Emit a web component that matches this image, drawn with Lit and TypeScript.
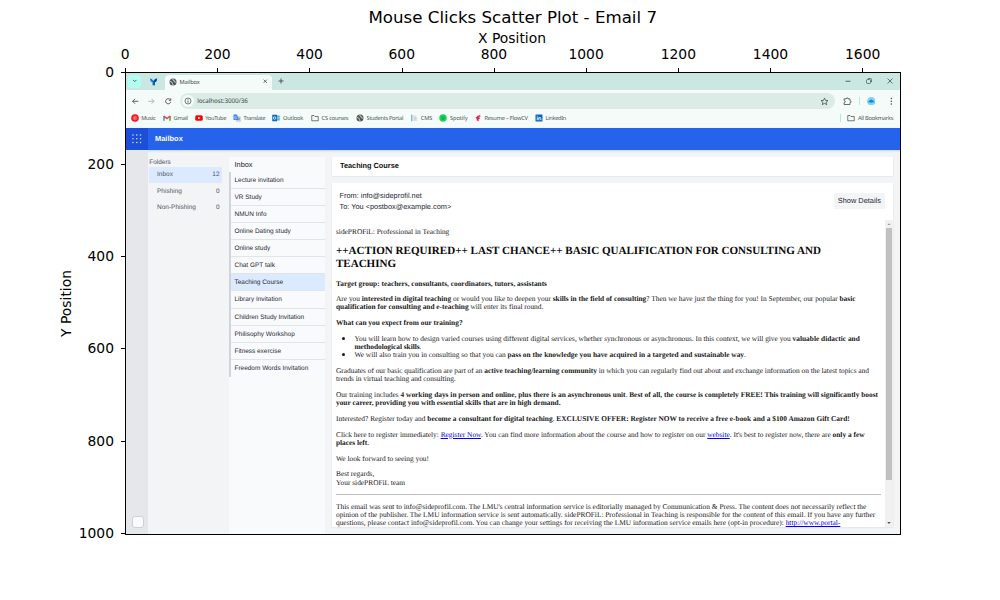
import { LitElement, html, css, svg, TemplateResult } from "lit";
import { customElement } from "lit/decorators.js";

const xTicks = [0, 200, 400, 600, 800, 1000, 1200, 1400, 1600];
const yTicks = [0, 200, 400, 600, 800, 1000];

const globe = svg`<circle cx="8" cy="8" r="7" fill="#4d5656"/><path d="M2 7 L5.5 8 L6.5 10.5 L8 12 L7.6 14.5 M8 1.6 L7.5 4 L10.5 5 L10.5 7.4 L14 8.5" fill="none" stroke="#e4eeec" stroke-width="1.6"/>`;
const folder = svg`<path d="M1.5 3 H6 L7.8 5 H14.5 V13.5 H1.5 Z" fill="none" stroke="#4a5453" stroke-width="1.5" stroke-linejoin="round"/>`;

const bookmarks: { icon: TemplateResult; label: string; w: number }[] = [
  { icon: svg`<circle cx="8" cy="8" r="7.6" fill="#f8101c"/><circle cx="8" cy="8" r="3.6" fill="none" stroke="#fbb" stroke-width="1"/><path d="M6.8 6 L10 8 L6.8 10 Z" fill="#fff"/>`, label: "Music", w: 14.3 },
  { icon: svg`<path d="M2 13.5 V4" stroke="#4285f4" stroke-width="3"/><path d="M14 13.5 V4" stroke="#34a853" stroke-width="3"/><path d="M1.5 4 L8 9.2 L14.5 4" fill="none" stroke="#ea4335" stroke-width="3"/>`, label: "Gmail", w: 14 },
  { icon: svg`<rect x="0.5" y="2.5" width="15" height="11" rx="3" fill="#f00"/><path d="M6.4 5.4 L11 8 L6.4 10.6 Z" fill="#fff"/>`, label: "YouTube", w: 21 },
  { icon: svg`<rect x="6" y="4.5" width="9.5" height="11" rx="1" fill="#c9d3df"/><path d="M1 1 H8 L11.5 12 H1 Z" fill="#4285f4"/><path d="M7 6 A2.2 2.2 0 1 0 7 8.2 H5" fill="none" stroke="#fff" stroke-width="1"/><path d="M10 8 H14.5 M12.5 8 Q12 11 10.5 12.5 M11 9.5 L14 12.8" stroke="#6b7f95" fill="none"/>`, label: "Translate", w: 21.7 },
  { icon: svg`<rect x="7" y="3" width="8.5" height="10" fill="#51b0ee"/><path d="M8 6 L11.5 9 L15.5 6" stroke="#e7f5ff" fill="none"/><rect x="0.5" y="1.5" width="9.5" height="13" fill="#0f6cbd"/><circle cx="5.2" cy="8" r="2.5" fill="none" stroke="#fff" stroke-width="1.5"/>`, label: "Outlook", w: 20 },
  { icon: folder, label: "CS courses", w: 26.8 },
  { icon: globe, label: "Students Portal", w: 36.5 },
  { icon: svg`<rect x="2" y="1.5" width="3" height="13" fill="#7fb9de"/><path d="M6.5 2.5 H11 L14.5 6 V14 H6.5 Z" fill="#dfe6ea"/><path d="M8 7 H12 M8 9.5 H13 M8 12 H13" stroke="#b4c1c9"/>`, label: "CMS", w: 11.5 },
  { icon: svg`<circle cx="8" cy="8" r="7.5" fill="#1ed760"/><path d="M4 5.8 Q8.5 4.5 12.3 6.6 M4.5 8.4 Q8.3 7.3 11.5 9 M5 10.8 Q8 10 10.8 11.3" fill="none" stroke="#17803d" stroke-width="1.1"/>`, label: "Spotify", w: 17.5 },
  { icon: svg`<path d="M5.5 4.5 L12.5 1.5 V6 L5.5 9 Z" fill="#ff2d6b"/><path d="M3 7 L7 5.5 L12.5 8.5 L9 10.5 L9.5 15 L5.5 12.5 V9.5 Z" fill="#e5194f"/>`, label: "Resume – FlowCV", w: 43.2 },
  { icon: svg`<rect x="1" y="1" width="14" height="14" rx="1" fill="#0a66c2"/><path d="M4.5 6.6 V12.4 M4.5 3.6 V5.2 M7.6 12.4 V6.6 M7.6 9.2 Q8 7 10 7 Q11.7 7 11.7 9.2 V12.4" fill="none" stroke="#fff" stroke-width="1.7"/>`, label: "LinkedIn", w: 20.5 },
];

const folders = [
  { name: "Inbox", w: 16, count: 12 },
  { name: "Phishing", w: 25, count: 0 },
  { name: "Non-Phishing", w: 39, count: 0 },
];

const mails = [
  { t: "Lecture invitation", w: 49 },
  { t: "VR Study", w: 27.3 },
  { t: "NMUN Info", w: 32 },
  { t: "Online Dating study", w: 56.3 },
  { t: "Online study", w: 35.7 },
  { t: "Chat GPT talk", w: 40.5 },
  { t: "Teaching Course", w: 48.5 },
  { t: "Library Invitation", w: 47.3 },
  { t: "Children Study Invitation", w: 69.7 },
  { t: "Philisophy Workshop", w: 60.3 },
  { t: "Fitness exercise", w: 46.5 },
  { t: "Freedom Words Invitation", w: 73.8 },
];

const icon = (body: unknown, cls = "ic") => html`<svg class=${cls} viewBox="0 0 16 16">${body}</svg>`;
const fit = (text: unknown, w: number) => html`<span class="fit" data-w=${w}>${text}</span>`;
const line = (text: unknown, w: number) => html`<span class="line">${fit(text, w)}</span>`;

/** Base that tracks every .fit run so that it fills its nominal width. */
class FittedElement extends LitElement {
  updated() {
    this.renderRoot.querySelectorAll<HTMLElement>(".fit").forEach((el) => {
      el.style.letterSpacing = "0px";
      const natural = el.getBoundingClientRect().width;
      const count = (el.textContent || "").length;
      el.style.letterSpacing = `${(Number(el.dataset.w) - natural) / count}px`;
    });
  }
}

const shared = css`
  :host { display: block; box-sizing: border-box; font-family: "Liberation Sans", Arial, sans-serif; text-rendering: geometricPrecision; }
  * { box-sizing: border-box; }
  .fit { display: inline-block; white-space: nowrap; }
  svg { display: block; flex: none; }
`;

@customElement("browser-chrome")
export class BrowserChrome extends FittedElement {
  static styles = [shared, css`
    :host { height: 54.5px; flex: none; background: #f4fbf9; color: #3f4a48; font-family: "Noto Sans", "Open Sans", sans-serif; font-size: 5.7px; line-height: 8px; }
    .strip { height: 17px; background: #cbe7e1; display: flex; padding-left: 2px; }
    .menu { width: 13px; height: 13px; margin: 1.5px 0 0; border-radius: 4px; background: #b2fff1; display: grid; place-items: center; }
    .menu svg { width: 5.5px; height: 5.5px; }
    .pin { width: 9px; height: 9px; margin: 4px 7px 0 8px; }
    .tab { width: 107px; height: 15px; margin-top: 2px; padding: 0 4px 2px; background: #f4fbf9; border-radius: 4px 4px 0 0; display: flex; align-items: center; }
    .tab .ic { width: 8px; height: 8px; margin-right: 2.6px; }
    .x { width: 6.5px; height: 6.5px; margin-left: auto; }
    .plus { width: 8px; height: 8px; margin: 4.2px 0 0 5.3px; }
    .win { margin-left: auto; display: flex; gap: 13px; padding: 4px 6.5px 0 0; }
    .win svg { width: 8px; height: 8px; }
    .bar { height: 19px; padding: 2px 6px 1px 5px; display: flex; align-items: center; margin-top: 1px; }
    .bar > svg { width: 8.6px; height: 8.6px; }
    .bar > .kebab { margin-left: auto; width: 9px; margin-right: -0.5px; }
    .back { margin-right: 7.8px; }
    .fwd { margin-right: 8.2px; }
    .url { width: 655px; height: 16px; margin: 0 7.7px; background: #dbece7; border-radius: 8px; display: flex; align-items: center; padding: 0 6px 0 1.5px; font-size: 6.3px; }
    .site { width: 12px; height: 12px; border-radius: 6px; background: #f4fbf9; display: grid; place-items: center; margin-right: 3.2px; }
    .site svg { width: 8px; height: 8px; }
    .star { width: 9px; height: 9px; margin-left: auto; }
    .sep { width: 1px; height: 8px; background: #a8efe3; margin: 0 7px 0 7px; }
    .marks { height: 16.4px; padding: 0 6.8px 0 4.6px; display: grid; align-items: center; grid-template-columns: 32.4px 31.6px 38.4px 39.5px 38.5px 45px 54.3px 29.2px 34.5px 61px 1fr auto; }
    .mark { display: flex; align-items: center; gap: 2.6px; color: #4c5856; }
    .mark .ic { width: 8px; height: 8px; }
    .mark .sep { margin: 0 4px 0 0; }
  `];
  render() {
    const k = "#414c4a";
    return html`
      <div class="strip">
        <div class="menu">${icon(svg`<path d="M3 5.5 L8 10.5 L13 5.5" fill="none" stroke=${k} stroke-width="2.6"/>`)}</div>
        ${icon(svg`<path d="M1.5 2.5 L5 3.5 L8 7 L11 3.5 L14.5 2.5 L13 8 L10.2 9.5 V14.5 H6.2 V9.5 L3 8 Z" fill="#1b78d2"/><path d="M8 7 L11 3.5 L14.5 2.5 L13 8 L10.2 9.5 V14.5 H8.5 Z" fill="#0b4694"/>`, "pin")}
        <div class="tab">${icon(globe)}${fit("Mailbox", 20)}${icon(svg`<path d="M4 4 L12 12 M12 4 L4 12" stroke=${k} stroke-width="2"/>`, "x")}</div>
        ${icon(svg`<path d="M8 3 V13 M3 8 H13" stroke=${k} stroke-width="1.8"/>`, "plus")}
        <div class="win">
          ${icon(svg`<path d="M3 8.5 H13" stroke=${k} stroke-width="1.6"/>`)}
          ${icon(svg`<rect x="3" y="5" width="8" height="8" rx="2" fill="none" stroke=${k} stroke-width="1.4"/><path d="M5.5 3 H11 Q13 3 13 5 V10.5" fill="none" stroke=${k} stroke-width="1.4"/>`)}
          ${icon(svg`<path d="M3 3 L13 13 M13 3 L3 13" stroke=${k} stroke-width="1.5"/>`)}
        </div>
      </div>
      <div class="bar">
        ${icon(svg`<path d="M13.5 8 H3 M7.5 3.5 L3 8 L7.5 12.5" fill="none" stroke=${k} stroke-width="1.6"/>`, "back")}
        ${icon(svg`<path d="M2.5 8 H13 M8.5 3.5 L13 8 L8.5 12.5" fill="none" stroke="#a7b1af" stroke-width="1.6"/>`, "fwd")}
        ${icon(svg`<path d="M12.5 9 A4.8 4.8 0 1 1 11.5 4.8 M12.6 2.5 V6.2 H9" fill="none" stroke=${k} stroke-width="1.6"/>`)}
        <div class="url">
          <div class="site">${icon(svg`<circle cx="8" cy="8" r="6" fill="none" stroke=${k} stroke-width="1.4"/><path d="M8 7 V11.5 M8 4.3 V5.9" stroke=${k} stroke-width="1.6"/>`)}</div>
          ${fit("localhost:3000/36", 50.5)}
          ${icon(svg`<path d="M8 2 L9.8 6 L14.2 6.4 L10.9 9.3 L11.9 13.6 L8 11.3 L4.1 13.6 L5.1 9.3 L1.8 6.4 L6.2 6 Z" fill="none" stroke=${k} stroke-width="1.4"/>`, "star")}
        </div>
        ${icon(svg`<path d="M2 3.5 H6 Q6 1.5 7.7 1.5 Q9.4 1.5 9.4 3.5 H13 V7 Q15 7 15 8.7 Q15 10.4 13 10.4 V14 H2 V10.8 Q4.2 10.5 4.2 8.8 Q4.2 7 2 6.8 Z" fill="none" stroke=${k} stroke-width="1.5"/>`)}
        <div class="sep"></div>
        ${icon(svg`<circle cx="8" cy="8" r="8" fill="#7fd3fb"/><path d="M2 10 Q5 4.5 8 4.5 Q11 4.5 14 10 Q11 9 8 10.5 Q5 9 2 10" fill="#1689d4"/>`)}
        ${icon(svg`<g fill=${k}><circle cx="9.5" cy="3" r="1.4"/><circle cx="9.5" cy="8" r="1.4"/><circle cx="9.5" cy="13" r="1.4"/></g>`, "kebab")}
      </div>
      <div class="marks">
        ${bookmarks.map((b) => html`<div class="mark">${icon(b.icon)}${fit(b.label, b.w)}</div>`)}
        <div class="mark"><div class="sep"></div>${icon(folder)}${fit("All Bookmarks", 35.3)}</div>
      </div>`;
  }
}

@customElement("mail-letter")
export class MailLetter extends FittedElement {
  static styles = [shared, css`
    :host { flex: 1; min-height: 0; overflow: hidden; padding: 0.6px 4px 0 4px; font-family: "Liberation Serif", "Times New Roman", serif; font-size: 7.38px; line-height: 8.3px; color: #1a1a1a; }
    .line { display: block; height: 8.3px; white-space: nowrap; }
    p { margin: 7.38px 0; }
    h2 { margin: 9.2px 0; font-size: 11.07px; line-height: 12.45px; color: #0a0a0a; }
    h2 .line { height: 12.45px; }
    ul { margin: 7.38px 0; padding-left: 18.4px; }
    li::marker { font-size: 10px; }
    a { color: #0000ee; text-decoration: underline; }
    hr { margin: 6.6px 0 7.2px; border: 0; height: 1px; background: #c0c0c0; }
  `];
  render() {
    return html`
      <p>${line("sidePROFiL: Professional in Teaching", 113.3)}</p>
      <h2>${line("++ACTION REQUIRED++ LAST CHANCE++ BASIC QUALIFICATION FOR CONSULTING AND", 485)}${line("TEACHING", 60)}</h2>
      <p><b>${line("Target group: teachers, consultants, coordinators, tutors, assistants", 211)}</b></p>
      <p>${line(html`Are you <b>interested in digital teaching</b> or would you like to deepen your <b>skills in the field of consulting</b>? Then we have just the thing for you! In September, our popular <b>basic</b>`, 519.5)}
      ${line(html`<b>qualification for consulting and e-teaching</b> will enter its final round.`, 207.3)}</p>
      <p><b>${line("What can you expect from our training?", 126.6)}</b></p>
      <ul>
        <li>${line(html`You will learn how to design varied courses using different digital services, whether synchronous or asynchronous. In this context, we will give you <b>valuable didactic and</b>`, 505.4)}
        ${line(html`<b>methodological skills</b>.`, 67)}</li>
        <li>${line(html`We will also train you in consulting so that you can <b>pass on the knowledge you have acquired in a targeted and sustainable way</b>.`, 391.5)}</li>
      </ul>
      <p>${line(html`Graduates of our basic qualification are part of an <b>active teaching/learning community</b> in which you can regularly find out about and exchange information on the latest topics and`, 533)}
      ${line("trends in virtual teaching and consulting.", 119.7)}</p>
      <p>${line(html`Our training includes <b>4 working days in person and online, plus there is an asynchronous unit</b>. <b>Best of all, the course is completely FREE! This training will significantly boost</b>`, 542)}
      ${line(html`<b>your career, providing you with essential skills that are in high demand.</b>`, 224.5)}</p>
      <p>${line(html`Interested? Register today and <b>become a consultant for digital teaching</b>. <b>EXCLUSIVE OFFER: Register NOW to receive a free e-book and a $100 Amazon Gift Card!</b>`, 513.8)}</p>
      <p>${line(html`Click here to register immediately: <a>Register Now</a>. You can find more information about the course and how to register on our <a>website</a>. It's best to register now, there are <b>only a few</b>`, 528.5)}
      ${line(html`<b>places left</b>.`, 33)}</p>
      <p>${line("We look forward to seeing you!", 93)}</p>
      <p>${line("Best regards,", 38.3)}${line("Your sidePROFiL team", 69)}</p>
      <hr />
      <p>${line("This email was sent to info@sideprofil.com. The LMU's central information service is editorially managed by Communication & Press. The content does not necessarily reflect the", 530.3)}
      ${line("opinion of the publisher. The LMU information service is sent automatically. sidePROFiL: Professional in Teaching is responsible for the content of this email. If you have any further", 539.3)}
      ${line(html`questions, please contact info@sideprofil.com. You can change your settings for receiving the LMU information service emails here (opt-in procedure): <a>http://www.portal-</a>`, 504.3)}</p>`;
  }
}

@customElement("mail-app")
export class MailApp extends FittedElement {
  static styles = [shared, css`
    :host { flex: 1; min-height: 0; display: flex; flex-direction: column; background: #f3f4f6; font-size: 6.46px; line-height: 8px; color: #1f2937; }
    header { height: 22.5px; flex: none; display: flex; align-items: center; background: #2563eb; color: #fff; font-size: 7.38px; font-weight: bold; box-shadow: 0 1px 2px #c8d3ee; }
    .apps { width: 22px; height: 22.5px; background: #1d4ed8; display: grid; place-items: center; margin-right: 7px; }
    .apps svg { width: 9.5px; height: 9.5px; }
    .body { flex: 1; min-height: 0; display: flex; }
    .rail { width: 22px; background: #e5e7eb; display: flex; align-items: flex-end; padding: 0 0 6px 6px; }
    .chip { width: 12px; height: 12px; border-radius: 3px; background: #fafafa; border: 1px solid #cfd0d1; }
    .folders { width: 81px; padding: 8.6px 7.5px 0 1.3px; color: #4b5563; }
    .folders > .fit { display: block; }
    .folder { height: 16.7px; padding: 0 2px 0 7.7px; display: flex; justify-content: space-between; align-items: center; border-radius: 1px; }
    .on { background: #dbeafe; }
    .list { width: 96px; margin-top: 7px; background: #f9fafb; }
    .list h3 { margin: 0; height: 15px; padding: 3.5px 0 0 5.5px; font-size: 7.38px; font-weight: normal; line-height: 8px; }
    .items { border-left: 2px solid #d1d5db; margin-left: -0.2px; }
    .item { height: 17.07px; padding: 5px 0 0 3.7px; border-bottom: 1px solid #e1e4e8; }
    .item:last-child { border-bottom: 0; }
    .main { flex: 1; padding: 7px 7.3px 7px 7px; display: flex; flex-direction: column; gap: 7px; }
    .card { background: #fff; box-shadow: 0 0.5px 1.5px #d4d7dc; }
    .subject { height: 19px; padding: 5px 8px; font-size: 7.38px; font-weight: bold; color: #111; }
    .mail { flex: 1; min-height: 0; display: flex; flex-direction: column; }
    .meta { height: 37px; flex: none; padding: 7.2px 7.6px 0 7.5px; display: flex; justify-content: space-between; font-size: 7.38px; line-height: 11.2px; }
    .btn { width: 51.5px; height: 16px; margin-top: 3.3px; background: #f3f4f6; text-align: center; line-height: 15.4px; }
    .scroll { flex: 1; min-height: 0; display: flex; }
    .track { width: 8px; background: #f1f1f1; display: flex; flex-direction: column; align-items: center; justify-content: space-between; }
    .track svg { width: 8px; height: 8px; }
    .thumb { width: 6px; height: 252px; background: #c1c1c1; margin-bottom: auto; }
  `];
  render() {
    return html`
      <header>
        <div class="apps"><svg viewBox="0 0 10 10">${[1, 5, 9].map((x) => [1, 5, 9].map((y) => svg`<circle cx=${x} cy=${y} r="0.85" fill="#c8d7fb"/>`))}</svg></div>
        ${fit("Mailbox", 27.8)}
      </header>
      <div class="body">
        <div class="rail"><div class="chip"></div></div>
        <div class="folders">
          <div>${fit("Folders", 21.5)}</div>
          ${folders.map((f, i) => html`<div class="folder ${i === 0 ? "on" : ""}">${fit(f.name, f.w)}<span>${f.count}</span></div>`)}
        </div>
        <div class="list">
          <h3>${fit("Inbox", 18)}</h3>
          <div class="items">${mails.map((m, i) => html`<div class="item ${i === 6 ? "on" : ""}">${fit(m.t, m.w)}</div>`)}</div>
        </div>
        <div class="main">
          <div class="card subject">${fit("Teaching Course", 58.8)}</div>
          <div class="card mail">
            <div class="meta">
              <div><div>${fit("From: info@sideprofil.net", 82.3)}</div><div>${fit("To: You <postbox@example.com>", 111.7)}</div></div>
              <div class="btn">${fit("Show Details", 43)}</div>
            </div>
            <div class="scroll">
              <mail-letter></mail-letter>
              <div class="track">
                <svg viewBox="0 0 8 8"><path d="M2.4 5 L4 3.2 L5.6 5 Z" fill="#999"/></svg>
                <div class="thumb"></div>
                <svg viewBox="0 0 8 8"><path d="M2.2 3 L4 5 L5.8 3 Z" fill="#505050"/></svg>
              </div>
            </div>
          </div>
        </div>
      </div>`;
  }
}

@customElement("app-root")
export class AppRoot extends LitElement {
  static styles = css`
    :host { display: flex; flex-direction: column; width: 1000px; height: 600px; overflow: hidden; background: #fff; color: #000; font: 13.89px/16px "DejaVu Sans", sans-serif; }
    * { box-sizing: border-box; }
    .title { height: 30px; padding: 8px 0 0 25.5px; text-align: center; font-size: 16.67px; line-height: 20px; }
    .xlabel { height: 16px; padding-left: 24px; text-align: center; }
    .xticks { height: 26px; display: grid; grid-template-columns: repeat(9, 92.2px); margin-left: 79.4px; }
    .xt { display: flex; flex-direction: column; align-items: center; justify-content: space-between; }
    .xt span { margin-left: -0.6px; }
    .xt i { width: 1px; height: 4px; background: #000; }
    .row { display: flex; height: 463px; }
    .ylabel { width: 22px; margin-left: 54.5px; display: flex; align-items: center; justify-content: center; }
    .ylabel span { writing-mode: vertical-rl; transform: rotate(180deg); }
    .yticks { width: 48.5px; display: grid; grid-template-rows: repeat(6, 92.2px); margin-top: -45.8px; }
    .yt { display: flex; align-items: center; justify-content: flex-end; gap: 7px; }
    .yt span { margin-top: -1px; }
    .yt i { width: 4px; height: 1px; background: #000; }
    .frame { width: 776px; height: 463px; border: 1px solid #000; display: flex; flex-direction: column; overflow: hidden; }
  `;
  render() {
    return html`
      <div class="title">Mouse Clicks Scatter Plot - Email 7</div>
      <div class="xlabel">X Position</div>
      <div class="xticks">${xTicks.map((t) => html`<div class="xt"><span>${t}</span><i></i></div>`)}</div>
      <div class="row">
        <div class="ylabel"><span>Y Position</span></div>
        <div class="yticks">${yTicks.map((t) => html`<div class="yt"><span>${t}</span><i></i></div>`)}</div>
        <div class="frame">
          <browser-chrome></browser-chrome>
          <mail-app></mail-app>
        </div>
      </div>`;
  }
}
